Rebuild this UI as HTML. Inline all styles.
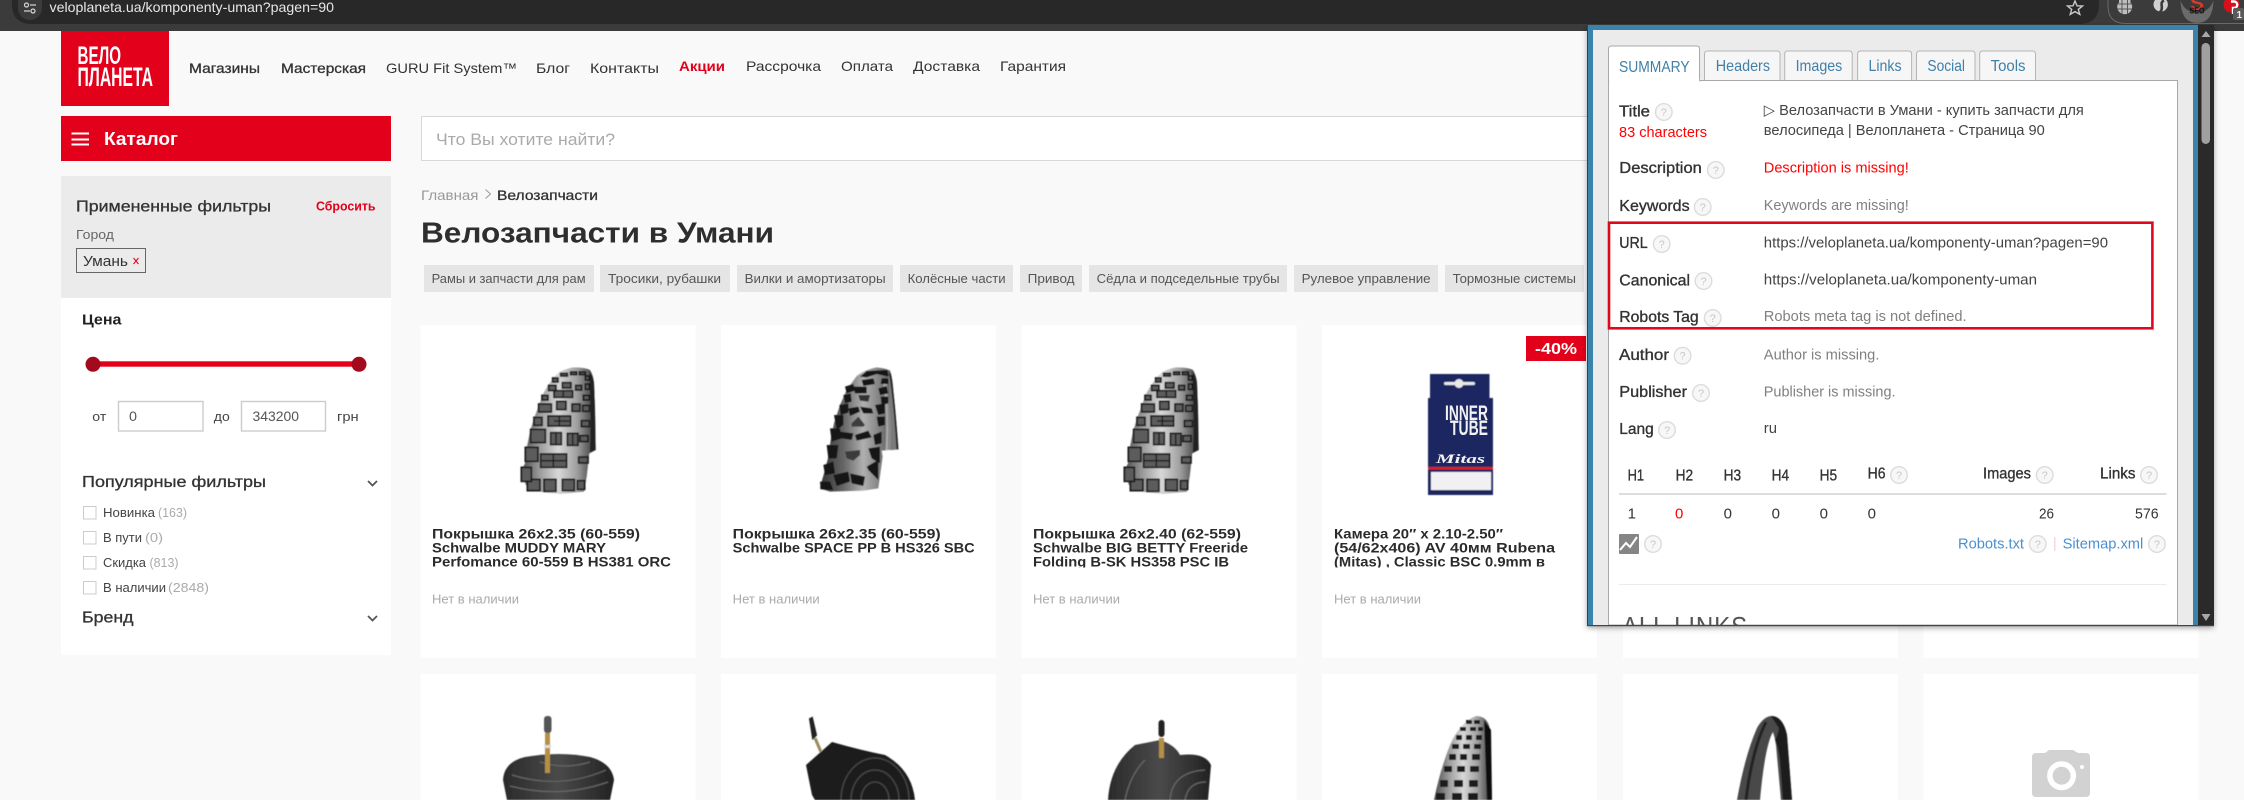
<!DOCTYPE html>
<html lang="ru">
<head>
<meta charset="utf-8">
<title>Велозапчасти в Умани</title>
<style>
html,body{margin:0;padding:0;background:#f9f9f9;width:2244px;height:800px;overflow:hidden}
svg{display:block}
text{font-family:"Liberation Sans","DejaVu Sans",sans-serif;white-space:pre}
.nav{font-size:14px;fill:#333}
.m{stroke:#333;stroke-width:.3px}
.chip{font-size:13px;fill:#555}
.pt{font-size:14px;font-weight:700;fill:#2b2b2b}
.no{font-size:12.5px;fill:#aaa}
.cb{font-size:12.5px;fill:#444}
.cn{font-size:12.5px;fill:#aaa}
.tab{font-size:16px;fill:#3f7fa8}
.l{font-size:15.5px;fill:#333;stroke:#333;stroke-width:.35px}
.v{font-size:15px;fill:#444}
.g{font-size:15px;fill:#808080}
.r{font-size:15px;fill:#f00}
.h{font-size:15px;fill:#333}
.q circle{fill:#f7f7f7;stroke:#dcdcdc;stroke-width:1.4}
.q text{font-size:11px;fill:#c8c8c8;text-anchor:middle}
.lk{font-size:15px;fill:#4a8fd0}
.k rect{fill:#5c5c5c;stroke:#141414;stroke-width:5}
.k path{fill:none;stroke:#141414;stroke-width:4}
</style>
</head>
<body>
<svg xmlns="http://www.w3.org/2000/svg" width="2244" height="800" viewBox="0 0 2244 800">
<defs>
<linearGradient id="tg" x1="0" x2="1" y1="0" y2="0">
<stop offset="0" stop-color="#4a4a4a"/><stop offset=".25" stop-color="#9a9a9a"/><stop offset=".5" stop-color="#d8d8d8"/><stop offset=".75" stop-color="#a0a0a0"/><stop offset="1" stop-color="#333"/>
</linearGradient>
<linearGradient id="tg2" x1="0" x2="1" y1="0" y2="0">
<stop offset="0" stop-color="#333"/><stop offset=".3" stop-color="#666"/><stop offset=".55" stop-color="#b0b0b0"/><stop offset=".8" stop-color="#777"/><stop offset="1" stop-color="#333"/>
</linearGradient>
<linearGradient id="tube" x1="0" x2="1" y1="0" y2="0">
<stop offset="0" stop-color="#2a2a2a"/><stop offset=".5" stop-color="#4a4a4a"/><stop offset="1" stop-color="#222"/>
</linearGradient>
<filter id="s" x="-5%" y="-5%" width="110%" height="110%"><feGaussianBlur stdDeviation=".45"/></filter>
<filter id="s3" x="-5%" y="-5%" width="110%" height="110%"><feGaussianBlur stdDeviation="1.5"/></filter>
<filter id="sh" x="-3%" y="-3%" width="106%" height="106%"><feDropShadow dx="0" dy="2" stdDeviation="3" flood-color="#000" flood-opacity=".35"/></filter>
<clipPath id="tc"><rect x="400" y="500" width="1200" height="67.5"/></clipPath>
<clipPath id="popc"><rect x="1594" y="30" width="600" height="595"/></clipPath>

<g id="t1" transform="scale(.33333)" filter="url(#s3)">
<path d="M190 22 Q225 22 240 30 Q250 45 252 70 L255 150 L257 270 L238 280 L235 300 Q232 350 222 395 L150 402 L60 392 L48 375 L32 335 L45 310 L50 265 L60 215 L72 175 L85 140 L100 100 Q112 78 125 60 Q140 42 150 35 Q170 25 190 22 Z" fill="url(#tg)"/>
<path d="M238 35 Q250 50 252 70 L255 150 L257 270 L240 278 Q244 150 238 35 Z" fill="#242424"/>
<g class="k">
<rect x="152" y="40" width="20" height="8"/><rect x="182" y="36" width="18" height="8"/><rect x="208" y="36" width="18" height="8"/>
<rect x="128" y="54" width="16" height="12"/><rect x="226" y="48" width="12" height="12"/>
<rect x="157" y="68" width="26" height="16"/><rect x="116" y="76" width="22" height="16"/><rect x="197" y="76" width="18" height="14"/><rect x="226" y="72" width="12" height="16"/>
<rect x="132" y="92" width="56" height="20"/><rect x="96" y="106" width="18" height="14"/><rect x="220" y="106" width="18" height="14"/>
<rect x="140" y="124" width="28" height="25"/><rect x="86" y="132" width="38" height="24"/><rect x="186" y="132" width="24" height="22"/><rect x="218" y="136" width="20" height="18"/>
<rect x="114" y="168" width="68" height="30"/><rect x="72" y="172" width="24" height="24"/><rect x="214" y="182" width="24" height="18"/>
<rect x="122" y="218" width="32" height="36"/><rect x="172" y="220" width="32" height="36"/><rect x="62" y="208" width="44" height="40"/><rect x="210" y="227" width="24" height="18"/>
<rect x="92" y="282" width="78" height="40"/><rect x="46" y="262" width="38" height="42"/><rect x="206" y="291" width="28" height="18"/>
<rect x="52" y="358" width="38" height="34"/><rect x="102" y="358" width="36" height="36"/><rect x="157" y="358" width="36" height="34"/><rect x="34" y="322" width="30" height="42"/><rect x="202" y="362" width="22" height="26"/>
<path d="M148 168v30M132 183h48M130 282v40M92 302h78M138 218v36M188 220v36M132 92v10M160 92v20"/>
</g>
</g>

<g id="t2" transform="scale(.33333)" filter="url(#s3)">
<path d="M200 22 Q225 24 240 32 Q248 55 250 90 L258 180 L266 268 L215 272 L218 290 L205 385 L160 392 L60 395 L30 385 L35 365 L45 330 L55 290 L62 240 L72 190 L90 135 L110 90 L140 48 Q165 28 200 22 Z" fill="url(#tg2)"/>
<path d="M232 40 Q248 60 250 90 L258 180 L266 268 L228 270 Q236 150 232 40 Z" fill="#7a7a7a"/>
<path d="M240 40 Q255 140 262 268" fill="none" stroke="#1a1a1a" stroke-width="5"/>
<path d="M232 60 Q240 160 236 268" fill="none" stroke="#303030" stroke-width="5"/>
<path d="M218 60 Q232 160 226 272 L240 272 Q244 150 232 60 Z" fill="#e8e8e8" opacity=".45"/>
<g fill="#151515">
<path d="M150 50 L170 33 L232 30 L236 50 L200 42 L170 52 Z"/>
<path d="M155 60 L190 55 L195 72 L160 78 Z"/><path d="M215 55 L235 55 L235 72 L212 72 Z"/>
<path d="M130 80 L170 80 L170 100 L135 100 Z"/><path d="M105 80 L130 72 L135 92 L110 100 Z"/><path d="M205 85 L230 78 L235 100 L210 105 Z"/>
<path d="M145 105 L180 105 L175 125 L150 122 Z" fill="#333"/><path d="M100 105 L122 100 L125 125 L105 130 Z"/>
<path d="M212 110 L235 110 L235 130 L215 135 Z"/><path d="M88 135 L115 130 L115 158 L92 165 Z"/><path d="M115 145 L145 140 L150 155 L120 168 Z"/><path d="M150 140 L185 145 L190 160 L160 160 Z"/><path d="M195 135 L225 130 L225 160 L205 165 Z"/>
<path d="M125 190 L145 170 L165 195 L160 200 L125 200 Z" fill="#3c3c3c"/><path d="M72 165 L100 165 L100 195 L80 210 Z"/><path d="M200 170 L225 170 L225 195 L205 200 Z"/>
<path d="M60 205 L90 205 L95 235 L65 245 Z"/><path d="M90 215 L130 220 L125 240 L95 235 Z"/><path d="M135 225 L175 212 L185 232 L140 242 Z"/><path d="M190 225 L215 215 L215 250 L195 255 Z"/>
<path d="M50 255 L85 255 L80 295 L55 295 Z"/><path d="M105 275 L150 270 L150 285 L130 302 L110 295 Z" fill="#3a3a3a"/><path d="M175 265 L210 260 L210 310 L185 295 Z"/>
<path d="M40 315 L70 305 L75 340 L45 345 Z"/><path d="M70 345 L115 335 L120 365 L80 378 Z"/><path d="M120 340 L165 350 L160 378 L125 370 Z"/><path d="M170 320 L205 300 L205 360 L175 330 Z"/>
<path d="M30 365 L60 365 L70 390 L32 388 Z"/>
</g>
</g>
</defs>

<!-- page -->
<rect width="2244" height="800" fill="#f9f9f9"/>

<!-- browser bar -->
<rect width="2244" height="31" fill="#3b3b3b"/>
<path d="M12 0 H2099 V4 Q2099 24 2079 24 H32 Q12 24 12 4 Z" fill="#282828"/>
<circle cx="30" cy="12" r="0" fill="#3b3b3b"/>
<path d="M18 0 H42 V8 A12 12 0 0 1 18 8 Z" fill="#3b3b3b"/>
<g stroke="#d8d8d8" stroke-width="1.2" fill="none">
<circle cx="26.5" cy="5" r="2"/><path d="M30 5h6"/><circle cx="33" cy="11" r="2"/><path d="M24 11h6"/>
</g>
<text x="49.5" y="12" font-size="14" fill="#e6e6e6" textLength="284.5" lengthAdjust="spacingAndGlyphs">veloplaneta.ua/komponenty-uman?pagen=90</text>
<path d="M2075 1 L2077 5.8 L2082.5 6 L2078.3 9.4 L2079.8 14.4 L2075 11.6 L2070.2 14.4 L2071.7 9.4 L2067.5 6 L2073 5.8 Z" fill="none" stroke="#c9c9c9" stroke-width="1.4"/>
<path d="M2108 0 V6 Q2108 23.5 2126 23.5 H2244" fill="none" stroke="#6a6a6a"/>
<path d="M2118.2 3 A7.5 7.5 0 1 0 2131.2 3 Z" fill="#bdbdbd"/>
<rect x="2119" y="0" width="11.5" height="3" fill="#bdbdbd"/>
<path d="M2117.5 4h14.5M2117.5 9h14.5M2122 0v14M2127.5 0v14" stroke="#555" stroke-width="1"/>
<path d="M2155 0 H2166.4 A7.2 7.2 0 1 1 2155 0 Z" fill="#cfcfcf"/>
<path d="M2164 0.5 C2158 3 2166 9 2158 13.5" stroke="#3b3b3b" stroke-width="2.6" fill="none"/>
<path d="M2180.5 0 H2213.5 A17 17 0 0 1 2180.5 0 Z M2180.5 0 Q2181 23 2197 23 Q2213 23 2213.5 0 Z" fill="#6b6b6b"/>
<text x="2190" y="10" font-size="20" font-weight="700" fill="#d93a2b" textLength="14" lengthAdjust="spacingAndGlyphs">S</text>
<text x="2189.5" y="13.5" font-size="8" font-weight="700" fill="#111" textLength="15" lengthAdjust="spacingAndGlyphs">SEO</text>
<path d="M2225 0 H2238 A8 8 0 1 1 2225 0 Z" fill="#d8101c"/>
<path d="M2231 1.5 h3 a3 3 0 0 1 0 6.5 h-1 v6" stroke="#fff" stroke-width="2.4" fill="none"/>
<rect x="2233" y="8" width="11" height="12" rx="2" fill="#5a5a5a"/>
<text x="2236.5" y="18" font-size="10" font-weight="700" fill="#eee">1</text>

<!-- header -->
<rect x="61" y="31" width="108" height="75" fill="#e2001a"/>
<text x="77.5" y="64" font-size="25" font-weight="700" fill="#fff" textLength="43.5" lengthAdjust="spacingAndGlyphs">ВЕЛО</text>
<text x="77.5" y="86" font-size="27" font-weight="700" fill="#fff" textLength="75.5" lengthAdjust="spacingAndGlyphs">ПЛАНЕТА</text>

<text class="nav m" x="189" y="73" textLength="71" lengthAdjust="spacingAndGlyphs">Магазины</text>
<text class="nav m" x="281" y="73" textLength="85" lengthAdjust="spacingAndGlyphs">Мастерская</text>
<text class="nav" x="386" y="73" textLength="131" lengthAdjust="spacingAndGlyphs">GURU Fit System™</text>
<text class="nav" x="536" y="73" textLength="34" lengthAdjust="spacingAndGlyphs">Блог</text>
<text class="nav" x="590" y="73" textLength="69" lengthAdjust="spacingAndGlyphs">Контакты</text>
<text class="nav" x="679" y="71" textLength="46" lengthAdjust="spacingAndGlyphs" font-weight="700" style="fill:#e2001a">Акции</text>
<text class="nav" x="746" y="71" textLength="75" lengthAdjust="spacingAndGlyphs">Рассрочка</text>
<text class="nav" x="841" y="71" textLength="52" lengthAdjust="spacingAndGlyphs">Оплата</text>
<text class="nav" x="913" y="71" textLength="67" lengthAdjust="spacingAndGlyphs">Доставка</text>
<text class="nav" x="1000" y="71" textLength="66" lengthAdjust="spacingAndGlyphs">Гарантия</text>

<!-- catalog -->
<rect x="61" y="116" width="330" height="45" fill="#e2001a"/>
<path d="M71.5 133.5h17.5M71.5 139.5h17.5M71.5 144.5h17.5" stroke="#fff" stroke-width="2"/>
<text x="104" y="145" font-size="18" font-weight="700" fill="#fff" textLength="74" lengthAdjust="spacingAndGlyphs">Каталог</text>

<!-- search -->
<rect x="421.5" y="116.5" width="1180" height="44" fill="#fff" stroke="#d8d8d8"/>
<text x="436" y="145" font-size="17" fill="#aaa" textLength="179" lengthAdjust="spacingAndGlyphs">Что Вы хотите найти?</text>

<!-- applied filters -->
<rect x="61" y="176" width="330" height="122" fill="#ebebeb"/>
<text x="76" y="211.5" font-size="16" fill="#333" class="m" textLength="195" lengthAdjust="spacingAndGlyphs">Примененные фильтры</text>
<text x="316" y="210.3" font-size="13" font-weight="700" fill="#e2001a" textLength="59.5" lengthAdjust="spacingAndGlyphs">Сбросить</text>
<text x="76" y="239" font-size="12.5" fill="#666" textLength="38" lengthAdjust="spacingAndGlyphs">Город</text>
<rect x="76.5" y="248.5" width="69" height="24" fill="none" stroke="#666"/>
<text x="83" y="266" font-size="14.5" fill="#333" textLength="45" lengthAdjust="spacingAndGlyphs">Умань</text>
<path d="M133.5 258l5 6m0-6l-5 6" stroke="#e2001a" stroke-width="1"/>

<!-- sidebar -->
<rect x="61" y="298" width="330" height="357" fill="#fff"/>
<text x="82" y="324.7" font-size="15" font-weight="700" fill="#222" textLength="39.5" lengthAdjust="spacingAndGlyphs">Цена</text>
<rect x="93" y="361.3" width="266" height="5.4" fill="#e2001a"/>
<circle cx="93" cy="364.3" r="7.5" fill="#a30a1e"/>
<circle cx="359" cy="364.3" r="7.5" fill="#a30a1e"/>
<text x="92.3" y="421" font-size="13" fill="#444" textLength="14" lengthAdjust="spacingAndGlyphs">от</text>
<rect x="118.5" y="401.5" width="84.5" height="29.5" fill="#fff" stroke="#ccc" stroke-width="1.4"/>
<text x="129" y="421" font-size="14" fill="#555" textLength="8" lengthAdjust="spacingAndGlyphs">0</text>
<text x="213.8" y="421" font-size="13" fill="#444" textLength="16" lengthAdjust="spacingAndGlyphs">до</text>
<rect x="241.5" y="401.5" width="84" height="29.5" fill="#fff" stroke="#ccc" stroke-width="1.4"/>
<text x="252.5" y="421" font-size="14" fill="#555" textLength="46.5" lengthAdjust="spacingAndGlyphs">343200</text>
<text x="337" y="421" font-size="13" fill="#444" textLength="21.7" lengthAdjust="spacingAndGlyphs">грн</text>

<text x="82" y="487" font-size="16" fill="#333" class="m" textLength="184" lengthAdjust="spacingAndGlyphs">Популярные фильтры</text>
<path d="M368 481l4.5 4.5l4.5-4.5" fill="none" stroke="#555" stroke-width="1.8"/>
<rect x="83.5" y="506.5" width="12.5" height="12.5" fill="#fff" stroke="#ccc"/>
<text class="cb" x="103" y="517" textLength="52" lengthAdjust="spacingAndGlyphs">Новинка</text>
<text class="cn" x="158" y="517" textLength="29" lengthAdjust="spacingAndGlyphs">(163)</text>
<rect x="83.5" y="531.5" width="12.5" height="12.5" fill="#fff" stroke="#ccc"/>
<text class="cb" x="103" y="542" textLength="39" lengthAdjust="spacingAndGlyphs">В пути</text>
<text class="cn" x="145" y="542" textLength="18" lengthAdjust="spacingAndGlyphs">(0)</text>
<rect x="83.5" y="556.5" width="12.5" height="12.5" fill="#fff" stroke="#ccc"/>
<text class="cb" x="103" y="567" textLength="43" lengthAdjust="spacingAndGlyphs">Скидка</text>
<text class="cn" x="149.5" y="567" textLength="29" lengthAdjust="spacingAndGlyphs">(813)</text>
<rect x="83.5" y="581.5" width="12.5" height="12.5" fill="#fff" stroke="#ccc"/>
<text class="cb" x="103" y="592" textLength="63" lengthAdjust="spacingAndGlyphs">В наличии</text>
<text class="cn" x="168" y="592" textLength="41" lengthAdjust="spacingAndGlyphs">(2848)</text>
<text x="82" y="622.7" font-size="16" fill="#333" class="m" textLength="51.5" lengthAdjust="spacingAndGlyphs">Бренд</text>
<path d="M368 616l4.5 4.5l4.5-4.5" fill="none" stroke="#555" stroke-width="1.8"/>

<!-- breadcrumb + h1 -->
<text x="421" y="200" font-size="14" fill="#999" textLength="57.5" lengthAdjust="spacingAndGlyphs">Главная</text>
<path d="M485.5 189.5l5 4.5l-5 4.5" fill="none" stroke="#999"/>
<text x="497" y="200" font-size="14" fill="#333" class="m" textLength="101" lengthAdjust="spacingAndGlyphs">Велозапчасти</text>
<text x="421" y="242.7" font-size="29" font-weight="700" fill="#2e2e2e" textLength="353" lengthAdjust="spacingAndGlyphs">Велозапчасти в Умани</text>

<!-- chips -->
<g fill="#e5e5e5">
<rect x="424" y="265" width="170" height="27"/><rect x="600" y="265" width="130" height="27"/><rect x="737" y="265" width="156" height="27"/><rect x="900" y="265" width="113" height="27"/><rect x="1020" y="265" width="62" height="27"/><rect x="1089" y="265" width="198" height="27"/><rect x="1294" y="265" width="144" height="27"/><rect x="1445" y="265" width="139" height="27"/>
</g>
<text class="chip" x="431.6" y="283" textLength="154" lengthAdjust="spacingAndGlyphs">Рамы и запчасти для рам</text>
<text class="chip" x="608" y="283" textLength="113" lengthAdjust="spacingAndGlyphs">Тросики, рубашки</text>
<text class="chip" x="744.6" y="283" textLength="141" lengthAdjust="spacingAndGlyphs">Вилки и амортизаторы</text>
<text class="chip" x="907.6" y="283" textLength="98" lengthAdjust="spacingAndGlyphs">Колёсные части</text>
<text class="chip" x="1027.6" y="283" textLength="47" lengthAdjust="spacingAndGlyphs">Привод</text>
<text class="chip" x="1096.6" y="283" textLength="183" lengthAdjust="spacingAndGlyphs">Сёдла и подседельные трубы</text>
<text class="chip" x="1301.6" y="283" textLength="129" lengthAdjust="spacingAndGlyphs">Рулевое управление</text>
<text class="chip" x="1452.6" y="283" textLength="123.4" lengthAdjust="spacingAndGlyphs">Тормозные системы</text>

<!-- cards row 1 -->
<g fill="#fff">
<rect x="420.5" y="325" width="275" height="333"/><rect x="721" y="325" width="275" height="333"/><rect x="1021.5" y="325" width="275" height="333"/><rect x="1322" y="325" width="275" height="333"/><rect x="1623" y="325" width="275" height="333"/><rect x="1923.5" y="325" width="275" height="333"/>
</g>
<use href="#t1" x="510" y="360"/>
<use href="#t2" x="810" y="360"/>
<use href="#t1" x="1113" y="360"/>

<!-- inner tube box -->
<g filter="url(#s)">
<rect x="1430" y="374" width="59.5" height="26" fill="#1a2560"/>
<rect x="1428" y="398" width="65" height="97" fill="#1a2560"/>
<rect x="1444" y="382" width="31" height="3" rx="1.5" fill="#e8e8e8"/><circle cx="1459" cy="383.5" r="4.5" fill="#e8e8e8"/>
<rect x="1428" y="467" width="65" height="2.6" fill="#d8222c"/>
<rect x="1431" y="472" width="60" height="18" fill="#f1f1f4"/>
</g>
<text x="1445" y="420" font-size="21" font-weight="700" fill="#f2f2f2" textLength="43" lengthAdjust="spacingAndGlyphs">INNER</text>
<text x="1450" y="435" font-size="21" font-weight="700" fill="#f2f2f2" textLength="38" lengthAdjust="spacingAndGlyphs">TUBE</text>
<text x="1436" y="463" font-size="13" font-weight="700" font-style="italic" fill="#f2f2f2" textLength="49" lengthAdjust="spacingAndGlyphs" style="font-family:'Liberation Serif',serif">Mitas</text>

<!-- badge -->
<rect x="1526" y="336" width="60" height="25" fill="#e2001a"/>
<text x="1535" y="354" font-size="16" font-weight="700" fill="#fff" textLength="42" lengthAdjust="spacingAndGlyphs">-40%</text>

<!-- titles -->
<g clip-path="url(#tc)">
<text class="pt" x="432" y="538.3" textLength="208" lengthAdjust="spacingAndGlyphs">Покрышка 26x2.35 (60-559)</text>
<text class="pt" x="432" y="552.3" textLength="174" lengthAdjust="spacingAndGlyphs">Schwalbe MUDDY MARY</text>
<text class="pt" x="432" y="566.3" textLength="239" lengthAdjust="spacingAndGlyphs">Perfomance 60-559 B HS381 ORC</text>
<text class="pt" x="732.7" y="538.3" textLength="208" lengthAdjust="spacingAndGlyphs">Покрышка 26x2.35 (60-559)</text>
<text class="pt" x="732.7" y="552.3" textLength="242" lengthAdjust="spacingAndGlyphs">Schwalbe SPACE PP B HS326 SBC</text>
<text class="pt" x="1033" y="538.3" textLength="208" lengthAdjust="spacingAndGlyphs">Покрышка 26x2.40 (62-559)</text>
<text class="pt" x="1033" y="552.3" textLength="215" lengthAdjust="spacingAndGlyphs">Schwalbe BIG BETTY Freeride</text>
<text class="pt" x="1033" y="566.3" textLength="196" lengthAdjust="spacingAndGlyphs">Folding B-SK HS358 PSC IB</text>
<text class="pt" x="1334" y="538.3" textLength="169" lengthAdjust="spacingAndGlyphs">Камера 20″ x 2.10-2.50″</text>
<text class="pt" x="1334" y="552.3" textLength="221" lengthAdjust="spacingAndGlyphs">(54/62x406) AV 40мм Rubena</text>
<text class="pt" x="1334" y="566.3" textLength="211" lengthAdjust="spacingAndGlyphs">(Mitas) , Classic BSC 0.9mm в</text>
</g>
<text class="no" x="432" y="603.3" textLength="87" lengthAdjust="spacingAndGlyphs">Нет в наличии</text>
<text class="no" x="732.7" y="603.3" textLength="87" lengthAdjust="spacingAndGlyphs">Нет в наличии</text>
<text class="no" x="1033" y="603.3" textLength="87" lengthAdjust="spacingAndGlyphs">Нет в наличии</text>
<text class="no" x="1334" y="603.3" textLength="87" lengthAdjust="spacingAndGlyphs">Нет в наличии</text>

<!-- cards row 2 -->
<g fill="#fff">
<rect x="420.5" y="674" width="275" height="126"/><rect x="721" y="674" width="275" height="126"/><rect x="1021.5" y="674" width="275" height="126"/><rect x="1322" y="674" width="275" height="126"/><rect x="1623" y="674" width="275" height="126"/><rect x="1923.5" y="674" width="275" height="126"/>
</g>
<!-- tube 1 -->
<g filter="url(#s)">
<path d="M507 800 L503 780 Q504 762 525 757 Q560 751 590 757 Q612 763 614 780 L610 800 Z" fill="url(#tube)"/>
<path d="M512 775 Q560 790 606 770 M510 786 Q560 799 608 782 M540 762 Q565 770 590 762" stroke="#666" stroke-width="1.2" fill="none"/>
<rect x="545" y="733" width="5" height="40" fill="#b48f45"/>
<rect x="544" y="745" width="7" height="3" fill="#ddd"/>
<rect x="544" y="716" width="7.5" height="17" rx="3" fill="#555"/>
</g>
<!-- tube 2 -->
<g filter="url(#s)">
<path d="M806 765 L832 742 Q860 750 885 755 Q912 770 915 800 L815 800 L812 795 Z" fill="#1c1c1c"/>
<path d="M841 800 A34 42 0 0 1 909 800 M851 800 A24 30 0 0 1 899 800 M861 800 A14 18 0 0 1 889 800" fill="none" stroke="#444" stroke-width="1.5"/>
<path d="M815 738 L821 752" stroke="#9a8a60" stroke-width="3"/>
<path d="M810 719 L812 718 L816 735 L813 738 Z" fill="#222" stroke="#222" stroke-width="2"/>
</g>
<!-- tube 3 -->
<g filter="url(#s)">
<path d="M1108 800 Q1110 765 1135 745 L1160 740 Q1175 745 1180 755 Q1205 752 1211 765 L1208 800 Z" fill="url(#tube)"/>
<path d="M1170 800 Q1172 772 1205 770 M1185 800 Q1188 782 1206 782 M1125 800 Q1130 775 1145 760" stroke="#666" stroke-width="1.3" fill="none"/>
<rect x="1159" y="738" width="5" height="20" fill="#b48f45"/>
<rect x="1158.5" y="720" width="6" height="17" rx="3" fill="#222"/>
</g>
<!-- tyre xc -->
<g filter="url(#s)">
<path d="M1476 716 Q1488 716 1490 730 L1492 800 L1434 800 Q1440 770 1450 745 Q1460 722 1476 716 Z" fill="url(#tg)"/>
<path d="M1484 720 L1491 730 L1492 800 L1487 800 Z" fill="#111"/>
<g fill="#1a1a1a">
<rect x="1466" y="720" width="6" height="4"/><rect x="1474" y="720" width="6" height="4"/><rect x="1460" y="727" width="6" height="4"/><rect x="1470" y="727" width="6" height="4"/><rect x="1478" y="727" width="5" height="4"/>
<rect x="1456" y="735" width="6" height="5"/><rect x="1466" y="735" width="6" height="5"/><rect x="1476" y="735" width="6" height="5"/>
<rect x="1452" y="744" width="7" height="5"/><rect x="1463" y="744" width="7" height="5"/><rect x="1474" y="744" width="7" height="5"/>
<rect x="1449" y="754" width="7" height="6"/><rect x="1460" y="754" width="7" height="6"/><rect x="1472" y="754" width="8" height="6"/>
<rect x="1444" y="766" width="8" height="6"/><rect x="1457" y="766" width="8" height="6"/><rect x="1470" y="766" width="9" height="6"/>
<rect x="1440" y="780" width="8" height="7"/><rect x="1454" y="780" width="9" height="7"/><rect x="1469" y="780" width="9" height="7"/>
<rect x="1436" y="793" width="9" height="7"/><rect x="1452" y="793" width="10" height="7"/><rect x="1468" y="793" width="10" height="7"/>
</g>
</g>
<!-- road tyre -->
<g filter="url(#s)">
<path d="M1771 716 Q1783 716 1787 735 L1792 800 L1781 800 L1776 745 Q1775 738 1773 732 Q1765 745 1760 800 L1737 800 Q1745 755 1757 728 Q1763 717 1771 716 Z" fill="#4a4a4a"/>
<path d="M1771 716 Q1783 716 1787 735 L1792 800 L1783 800 L1780 760 Q1778 745 1775 740 Q1778 735 1779 728 Z" fill="#1a1a1a"/>
<path d="M1766 722 Q1752 750 1746 800" stroke="#222" stroke-width="3" fill="none"/>
</g>
<!-- camera -->
<path d="M2032 757 Q2032 753 2036 753 L2045 753 L2049 750 L2073 750 L2078 753 L2086 753 Q2090 753 2090 757 L2090 793 Q2090 797 2086 797 L2036 797 Q2032 797 2032 793 Z" fill="#d2d2d2"/>
<circle cx="2061.6" cy="775.7" r="14.5" fill="#fff"/>
<circle cx="2061.6" cy="775.7" r="9" fill="#d2d2d2"/>
<circle cx="2082" cy="767" r="2" fill="#fff"/>

<!-- SEO popup -->
<g filter="url(#sh)">
<rect x="1587" y="25" width="627" height="601" fill="#2c2c2c"/>
</g>
<rect x="1588" y="25" width="610" height="600" fill="#3a84ac"/>
<rect x="1593" y="30" width="600" height="595" fill="#ebebeb"/>
<path d="M2206 31 L2210.5 37 L2201.5 37 Z" fill="#a8a8a8"/>
<rect x="2201.5" y="43" width="8.5" height="101" rx="4.2" fill="#a0a0a0"/>
<path d="M2206 621 L2201.5 614 L2210.5 614 Z" fill="#a8a8a8"/>

<!-- tabs -->
<g stroke="#b5b5b5" fill="#f6f6f6">
<path d="M1704.5 80V54q0-3 3-3h69.5q3 0 3 3v26"/>
<path d="M1784.7 80V54q0-3 3-3h61.5q3 0 3 3v26"/>
<path d="M1857.6 80V54q0-3 3-3h48q3 0 3 3v26"/>
<path d="M1916.5 80V54q0-3 3-3h52.5q3 0 3 3v26"/>
<path d="M1979.7 80V54q0-3 3-3h49.8q3 0 3 3v26"/>
</g>
<rect x="1608.5" y="80.5" width="569" height="544.5" fill="#fff" stroke="#a8a8a8"/>
<path d="M1608.5 81V49q0-3 3-3h85q3 0 3 3v32z" fill="#fff" stroke="#a8a8a8"/>
<rect x="1609.2" y="79" width="90" height="3" fill="#fff"/>
<text class="tab" x="1619" y="72" textLength="70.6" lengthAdjust="spacingAndGlyphs">SUMMARY</text>
<text class="tab" x="1715.8" y="71" textLength="54.2" lengthAdjust="spacingAndGlyphs">Headers</text>
<text class="tab" x="1795.6" y="71" textLength="46.7" lengthAdjust="spacingAndGlyphs">Images</text>
<text class="tab" x="1868.5" y="71" textLength="33.1" lengthAdjust="spacingAndGlyphs">Links</text>
<text class="tab" x="1927.4" y="71" textLength="37.6" lengthAdjust="spacingAndGlyphs">Social</text>
<text class="tab" x="1990.6" y="71" textLength="34.9" lengthAdjust="spacingAndGlyphs">Tools</text>

<!-- summary rows -->
<text class="l" x="1619" y="116.5" textLength="31" lengthAdjust="spacingAndGlyphs">Title</text>
<g class="q" transform="translate(1663.8 112)"><circle r="8.3"/><text y="4">?</text></g>
<text class="r" x="1619" y="137" textLength="88" lengthAdjust="spacingAndGlyphs">83 characters</text>
<text class="v" x="1763.8" y="115" textLength="320" lengthAdjust="spacingAndGlyphs">▷ Велозапчасти в Умани - купить запчасти для</text>
<text class="v" x="1763.8" y="135" textLength="281" lengthAdjust="spacingAndGlyphs">велосипеда | Велопланета - Страница 90</text>

<text class="l" x="1619.3" y="173" textLength="82.5" lengthAdjust="spacingAndGlyphs">Description</text>
<g class="q" transform="translate(1715.8 170)"><circle r="8.3"/><text y="4">?</text></g>
<text class="r" x="1763.8" y="172.5" textLength="145" lengthAdjust="spacingAndGlyphs">Description is missing!</text>

<text class="l" x="1619.3" y="211" textLength="70.3" lengthAdjust="spacingAndGlyphs">Keywords</text>
<g class="q" transform="translate(1702.7 207)"><circle r="8.3"/><text y="4">?</text></g>
<text class="g" x="1763.8" y="210" textLength="145" lengthAdjust="spacingAndGlyphs">Keywords are missing!</text>

<text class="l" x="1619.3" y="248" textLength="28.4" lengthAdjust="spacingAndGlyphs">URL</text>
<g class="q" transform="translate(1661.7 244)"><circle r="8.3"/><text y="4">?</text></g>
<text class="v" x="1763.8" y="247.7" textLength="344.2" lengthAdjust="spacingAndGlyphs">https://veloplaneta.ua/komponenty-uman?pagen=90</text>

<text class="l" x="1619.3" y="285.5" textLength="70.7" lengthAdjust="spacingAndGlyphs">Canonical</text>
<g class="q" transform="translate(1703.5 281)"><circle r="8.3"/><text y="4">?</text></g>
<text class="v" x="1763.8" y="284.3" textLength="273.2" lengthAdjust="spacingAndGlyphs">https://veloplaneta.ua/komponenty-uman</text>

<text class="l" x="1619.3" y="322" textLength="79.4" lengthAdjust="spacingAndGlyphs">Robots Tag</text>
<g class="q" transform="translate(1712.7 318)"><circle r="8.3"/><text y="4">?</text></g>
<text class="g" x="1763.8" y="321" textLength="202.8" lengthAdjust="spacingAndGlyphs">Robots meta tag is not defined.</text>

<rect x="1609" y="222.7" width="543.4" height="105.6" fill="none" stroke="#dd0a1e" stroke-width="2.6"/>

<text class="l" x="1619" y="360" textLength="50" lengthAdjust="spacingAndGlyphs">Author</text>
<g class="q" transform="translate(1682.6 355.7)"><circle r="8.3"/><text y="4">?</text></g>
<text class="g" x="1763.8" y="359.3" textLength="115.6" lengthAdjust="spacingAndGlyphs">Author is missing.</text>

<text class="l" x="1619.3" y="397" textLength="67.7" lengthAdjust="spacingAndGlyphs">Publisher</text>
<g class="q" transform="translate(1701 393)"><circle r="8.3"/><text y="4">?</text></g>
<text class="g" x="1763.8" y="396.3" textLength="131.7" lengthAdjust="spacingAndGlyphs">Publisher is missing.</text>

<text class="l" x="1619.3" y="434" textLength="34.5" lengthAdjust="spacingAndGlyphs">Lang</text>
<g class="q" transform="translate(1667 430)"><circle r="8.3"/><text y="4">?</text></g>
<text class="v" x="1763.8" y="433" textLength="13.2" lengthAdjust="spacingAndGlyphs">ru</text>

<text class="l" x="1627.6" y="480.7" textLength="16.5" lengthAdjust="spacingAndGlyphs">H1</text>
<text class="l" x="1675.6" y="480.7" textLength="17.5" lengthAdjust="spacingAndGlyphs">H2</text>
<text class="l" x="1723.6" y="480.7" textLength="17.5" lengthAdjust="spacingAndGlyphs">H3</text>
<text class="l" x="1771.6" y="480.7" textLength="17.5" lengthAdjust="spacingAndGlyphs">H4</text>
<text class="l" x="1819.6" y="480.7" textLength="17.5" lengthAdjust="spacingAndGlyphs">H5</text>
<text class="l" x="1867.6" y="478.3" textLength="17.9" lengthAdjust="spacingAndGlyphs">H6</text>
<g class="q" transform="translate(1899 475)"><circle r="8.3"/><text y="4">?</text></g>
<text class="l" x="1983" y="478.3" textLength="48" lengthAdjust="spacingAndGlyphs">Images</text>
<g class="q" transform="translate(2044.7 475)"><circle r="8.3"/><text y="4">?</text></g>
<text class="l" x="2100" y="478.3" textLength="35.5" lengthAdjust="spacingAndGlyphs">Links</text>
<g class="q" transform="translate(2149 475)"><circle r="8.3"/><text y="4">?</text></g>
<rect x="1619" y="493" width="547.5" height="2" fill="#ddd"/>

<text class="h" x="1627.6" y="518.3">1</text>
<text class="r" x="1675" y="518.3">0</text>
<text class="h" x="1723.6" y="518.3">0</text>
<text class="h" x="1771.6" y="518.3">0</text>
<text class="h" x="1819.6" y="518.3">0</text>
<text class="h" x="1867.6" y="518.3">0</text>
<text class="h" x="2039" y="518.3" textLength="15" lengthAdjust="spacingAndGlyphs">26</text>
<text class="h" x="2135" y="518.3" textLength="23.6" lengthAdjust="spacingAndGlyphs">576</text>

<rect x="1619" y="534" width="20" height="20" rx="1" fill="#858585"/>
<path d="M1620 550 L1626 543 L1630 547 L1637 537" fill="none" stroke="#fff" stroke-width="2"/>
<g class="q" transform="translate(1653 544)"><circle r="8.3"/><text y="4">?</text></g>
<text class="lk" x="1958" y="548.3" textLength="66" lengthAdjust="spacingAndGlyphs">Robots.txt</text>
<g class="q" transform="translate(2037.8 544)"><circle r="8.3"/><text y="4">?</text></g>
<rect x="2054.3" y="537" width="1" height="14" fill="#f2c8c8"/>
<text class="lk" x="2062.6" y="548.3" textLength="80.7" lengthAdjust="spacingAndGlyphs">Sitemap.xml</text>
<g class="q" transform="translate(2156.9 544)"><circle r="8.3"/><text y="4">?</text></g>
<rect x="1619" y="584" width="547.5" height="1" fill="#ebebeb"/>

<g clip-path="url(#popc)">
<text x="1622" y="636" font-size="28" fill="#555" textLength="126" lengthAdjust="spacingAndGlyphs" style="letter-spacing:1px">ALL LINKS</text>
</g>
<rect x="1587" y="625" width="627" height="1.2" fill="#444"/>
<rect x="1587" y="25" width="1" height="601" fill="#3f3f3f"/>
</svg>
</body>
</html>
